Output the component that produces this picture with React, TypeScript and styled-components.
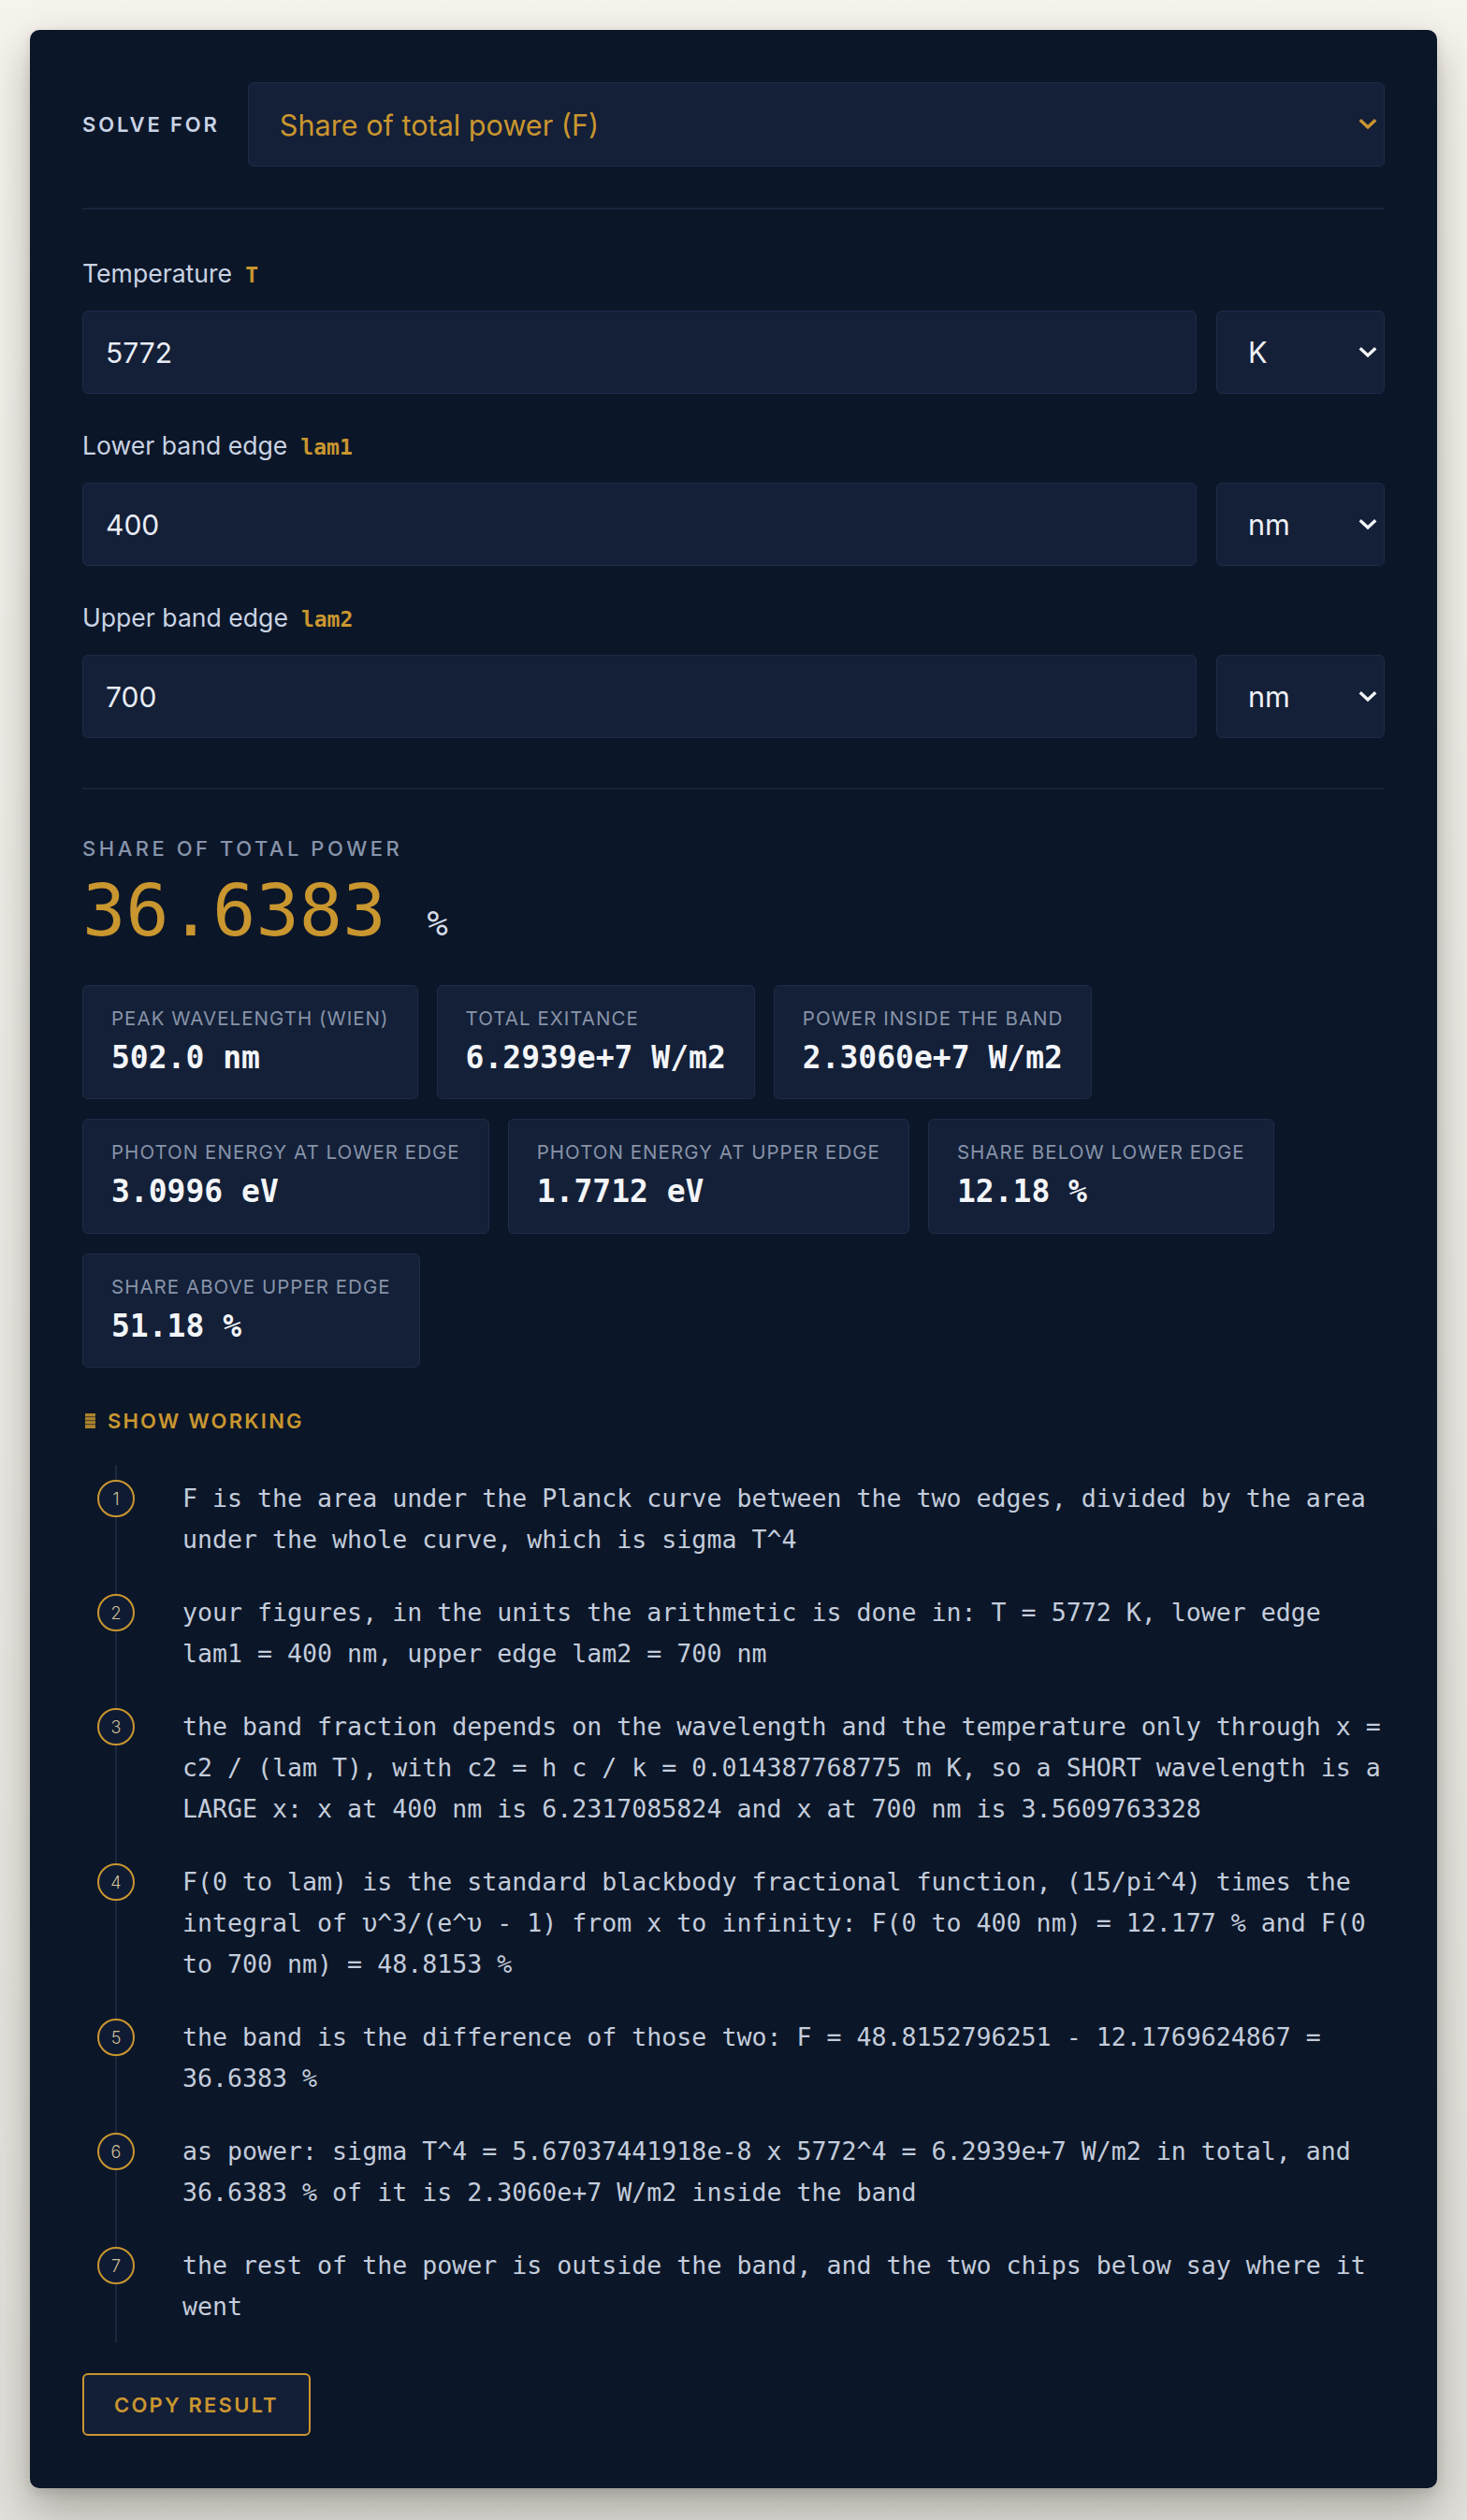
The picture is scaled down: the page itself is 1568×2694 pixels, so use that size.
import React from "react";
import styled, { createGlobalStyle } from "styled-components";

const GOLD = "#c9962f";
const MONO = '"DejaVu Sans Mono", "Liberation Mono", monospace';
const SANS = 'Inter, "Noto Sans", "Liberation Sans", sans-serif';

const GlobalStyle = createGlobalStyle`
  * { box-sizing: border-box; }
  html, body { margin: 0; padding: 0; }
  body {
    background: linear-gradient(180deg, #f6f3ed 0%, #ebe9e3 60%, #e2e0da 100%);
    font-family: ${SANS};
    min-height: 100vh;
  }
`;

const Page = styled.div`
  padding: 32px;
`;

const Card = styled.main`
  background: #0b1628;
  border-radius: 10px;
  padding: 56px;
  display: flex;
  flex-direction: column;
  box-shadow: 0 22px 48px rgba(40, 38, 30, 0.32), 0 4px 12px rgba(40, 38, 30, 0.12);
`;

const SolveRow = styled.div`
  display: flex;
  align-items: center;
  gap: 30px;
`;

const SolveLabel = styled.span`
  font-size: 22px;
  font-weight: 600;
  letter-spacing: 0.13em;
  color: #c9d3e6;
  text-transform: uppercase;
`;

const SelectWrap = styled.div<{ $width?: number }>`
  position: relative;
  flex: ${(p) => (p.$width ? `0 0 ${p.$width}px` : "1 1 auto")};
`;

const Select = styled.select<{ $height: number; $color: string }>`
  appearance: none;
  -webkit-appearance: none;
  width: 100%;
  height: ${(p) => p.$height}px;
  background: #141f38;
  border: 1px solid #1f2c48;
  border-radius: 6px;
  padding: 0 48px 0 33px;
  font-family: ${SANS};
  font-size: 30.6px;
  color: ${(p) => p.$color};
  outline: none;
`;

const Chevron = styled.svg`
  position: absolute;
  right: 8px;
  top: 50%;
  transform: translateY(-50%);
  pointer-events: none;
`;

const Divider = styled.hr<{ $top: number; $bottom: number }>`
  border: none;
  height: 2px;
  background: #17233a;
  margin: ${(p) => p.$top}px 0 ${(p) => p.$bottom}px;
`;

const FieldList = styled.div`
  display: flex;
  flex-direction: column;
  gap: 39px;
`;

const Field = styled.div`
  display: flex;
  flex-direction: column;
`;

const FieldLabel = styled.label`
  font-size: 26.6px;
  line-height: 32px;
  color: #c9d3e3;
  margin-bottom: 22px;
`;

const Code = styled.code`
  font-family: ${MONO};
  font-size: 23px;
  font-weight: 700;
  color: ${GOLD};
  margin-left: 14px;
`;

const InputRow = styled.div`
  display: flex;
  gap: 21px;
`;

const Input = styled.input`
  flex: 1 1 auto;
  min-width: 0;
  height: 89px;
  background: #141f38;
  border: 1px solid #1f2c48;
  border-radius: 6px;
  padding: 0 24px;
  font-family: ${SANS};
  font-size: 30px;
  color: #e8edf5;
  outline: none;
`;

const ResultLabel = styled.div`
  font-size: 22px;
  line-height: 26px;
  font-weight: 500;
  letter-spacing: 0.16em;
  color: #8794ab;
  text-transform: uppercase;
`;

const BigRow = styled.div`
  display: flex;
  align-items: baseline;
  margin-top: 15px;
`;

const BigNumber = styled.span`
  font-family: ${MONO};
  font-size: 77px;
  line-height: 1;
  color: ${GOLD};
`;

const BigUnit = styled.span`
  font-family: ${MONO};
  font-size: 37px;
  color: #d6dce7;
  margin-left: 44px;
`;

const Chips = styled.div`
  display: flex;
  flex-wrap: wrap;
  gap: 21px 20px;
  margin-top: 40.5px;
`;

const Chip = styled.div`
  display: flex;
  flex-direction: column;
  gap: 10px;
  background: #132038;
  border: 1px solid #1f2c47;
  border-radius: 6px;
  padding: 23px 30px 24px;
`;

const ChipLabel = styled.span`
  font-size: 20.5px;
  line-height: 24px;
  letter-spacing: 0.05em;
  color: #8893a8;
  text-transform: uppercase;
`;

const ChipValue = styled.span`
  font-family: ${MONO};
  font-size: 33px;
  line-height: 1.2;
  font-weight: 700;
  color: #f3f5f8;
`;

const Summary = styled.div`
  display: flex;
  align-items: center;
  gap: 13px;
  margin-top: 44px;
  font-size: 22px;
  line-height: 26px;
  font-weight: 600;
  letter-spacing: 0.1em;
  color: ${GOLD};
  text-transform: uppercase;
  padding-left: 3px;
`;

const Steps = styled.ol`
  list-style: none;
  margin: 34px 0 0;
  padding: 14px 0 16px 16px;
  position: relative;
  display: flex;
  flex-direction: column;
  gap: 34px;

  &::before {
    content: "";
    position: absolute;
    left: 35px;
    top: 0;
    bottom: 0;
    width: 2px;
    background: #1c2840;
  }
`;

const Step = styled.li`
  display: grid;
  grid-template-columns: 40px 1fr;
  column-gap: 51px;
  align-items: start;
`;

const StepNum = styled.span`
  position: relative;
  z-index: 1;
  width: 40px;
  height: 40px;
  margin-top: 2px;
  border: 2px solid ${GOLD};
  border-radius: 50%;
  background: #0f1b32;
  display: flex;
  align-items: center;
  justify-content: center;
  font-family: ${SANS};
  font-size: 18px;
  font-weight: 300;
  color: #cdbf99;
`;

const StepText = styled.p`
  margin: 0;
  font-family: ${MONO};
  font-size: 26.6px;
  line-height: 44px;
  color: #c3ccdb;
`;

const CopyButton = styled.button`
  align-self: flex-start;
  margin-top: 33px;
  background: #131e37;
  border: 2px solid ${GOLD};
  border-radius: 6px;
  padding: 18.5px 32px;
  font-family: ${SANS};
  font-size: 22px;
  line-height: 26px;
  font-weight: 600;
  letter-spacing: 0.1em;
  color: ${GOLD};
  text-transform: uppercase;
  cursor: pointer;
`;

const ChevronIcon = ({ color }: { color: string }) => (
  <Chevron width="20" height="12" viewBox="0 0 20 12">
    <path d="M3 2.5 L10 9 L17 2.5" fill="none" stroke={color} strokeWidth="3.4" strokeLinecap="square" />
  </Chevron>
);

const WorkingIcon = () => (
  <svg width="11" height="16" viewBox="0 0 11 16">
    <rect x="0" y="0" width="11" height="16" fill={GOLD} opacity="0.85" />
    <rect x="0" y="3" width="11" height="1.2" fill="#0b1628" opacity="0.55" />
    <rect x="0" y="7" width="11" height="1.2" fill="#0b1628" opacity="0.55" />
    <rect x="0" y="11" width="11" height="1.2" fill="#0b1628" opacity="0.55" />
  </svg>
);

const fields = [
  { label: "Temperature", code: "T", value: "5772", unit: "K", units: ["K", "°C", "°F"] },
  { label: "Lower band edge", code: "lam1", value: "400", unit: "nm", units: ["nm", "µm", "m"] },
  { label: "Upper band edge", code: "lam2", value: "700", unit: "nm", units: ["nm", "µm", "m"] },
];

const chips = [
  { label: "Peak wavelength (Wien)", value: "502.0 nm" },
  { label: "Total exitance", value: "6.2939e+7 W/m2" },
  { label: "Power inside the band", value: "2.3060e+7 W/m2" },
  { label: "Photon energy at lower edge", value: "3.0996 eV" },
  { label: "Photon energy at upper edge", value: "1.7712 eV" },
  { label: "Share below lower edge", value: "12.18 %" },
  { label: "Share above upper edge", value: "51.18 %" },
];

const steps = [
  "F is the area under the Planck curve between the two edges, divided by the area under the whole curve, which is sigma T^4",
  "your figures, in the units the arithmetic is done in: T = 5772 K, lower edge lam1 = 400 nm, upper edge lam2 = 700 nm",
  "the band fraction depends on the wavelength and the temperature only through x = c2 / (lam T), with c2 = h c / k = 0.014387768775 m K, so a SHORT wavelength is a LARGE x: x at 400 nm is 6.2317085824 and x at 700 nm is 3.5609763328",
  "F(0 to lam) is the standard blackbody fractional function, (15/pi^4) times the integral of υ^3/(e^υ - 1) from x to infinity: F(0 to 400 nm) = 12.177 % and F(0 to 700 nm) = 48.8153 %",
  "the band is the difference of those two: F = 48.8152796251 - 12.1769624867 = 36.6383 %",
  "as power: sigma T^4 = 5.67037441918e-8 x 5772^4 = 6.2939e+7 W/m2 in total, and 36.6383 % of it is 2.3060e+7 W/m2 inside the band",
  "the rest of the power is outside the band, and the two chips below say where it went",
];

export default function App() {
  return (
    <>
      <GlobalStyle />
      <Page>
        <Card>
          <SolveRow>
            <SolveLabel>Solve for</SolveLabel>
            <SelectWrap>
              <Select $height={90} $color={GOLD} defaultValue="F">
                <option value="F">Share of total power (F)</option>
                <option value="T">Temperature (T)</option>
                <option value="lam1">Lower band edge (lam1)</option>
                <option value="lam2">Upper band edge (lam2)</option>
              </Select>
              <ChevronIcon color={GOLD} />
            </SelectWrap>
          </SolveRow>

          <Divider $top={44} $bottom={52} />

          <FieldList>
            {fields.map((f) => (
              <Field key={f.code}>
                <FieldLabel>
                  {f.label}
                  <Code>{f.code}</Code>
                </FieldLabel>
                <InputRow>
                  <Input defaultValue={f.value} />
                  <SelectWrap $width={180}>
                    <Select $height={89} $color="#eef1f6" defaultValue={f.unit}>
                      {f.units.map((u) => (
                        <option key={u} value={u}>
                          {u}
                        </option>
                      ))}
                    </Select>
                    <ChevronIcon color="#f2f4f8" />
                  </SelectWrap>
                </InputRow>
              </Field>
            ))}
          </FieldList>

          <Divider $top={53} $bottom={50} />

          <ResultLabel>Share of total power</ResultLabel>
          <BigRow>
            <BigNumber>36.6383</BigNumber>
            <BigUnit>%</BigUnit>
          </BigRow>

          <Chips>
            {chips.map((c) => (
              <Chip key={c.label}>
                <ChipLabel>{c.label}</ChipLabel>
                <ChipValue>{c.value}</ChipValue>
              </Chip>
            ))}
          </Chips>

          <Summary>
            <WorkingIcon />
            Show working
          </Summary>

          <Steps>
            {steps.map((s, i) => (
              <Step key={i}>
                <StepNum>{i + 1}</StepNum>
                <StepText>{s}</StepText>
              </Step>
            ))}
          </Steps>

          <CopyButton>Copy result</CopyButton>
        </Card>
      </Page>
    </>
  );
}
